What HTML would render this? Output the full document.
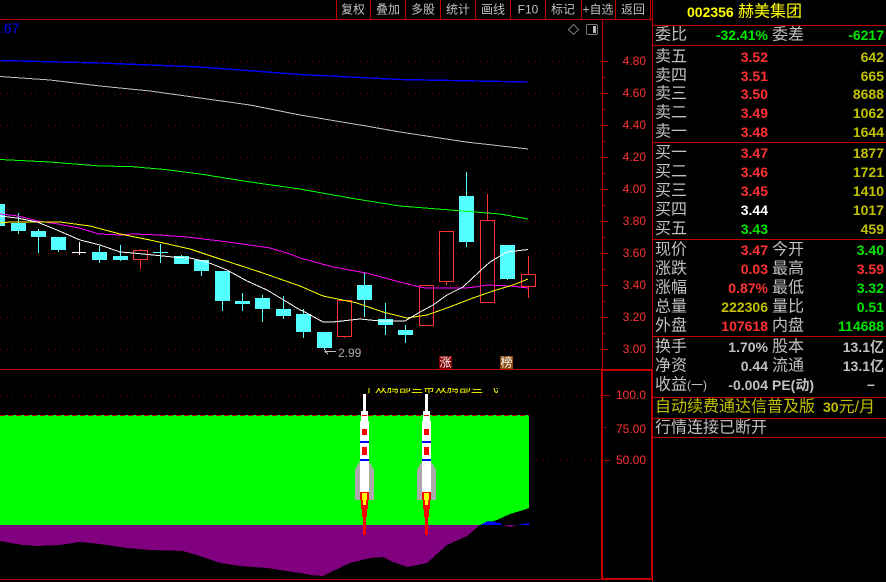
<!DOCTYPE html>
<html><head><meta charset="utf-8"><style>
html,body{margin:0;padding:0;background:#000;width:886px;height:582px;overflow:hidden}
svg{display:block}
text{font-family:"Liberation Sans","WenQuanYi Zen Hei","Noto Sans CJK SC",sans-serif;dominant-baseline:central}
.l{font-size:16px;fill:#c0c0c0}
.v{font-size:14px;font-weight:bold;text-anchor:end}
.r{fill:#ff3232}.g{fill:#00e600}.y{fill:#c0c000}.w{fill:#fff}.s{fill:#c0c0c0}
.t{font-size:12px;fill:#c0c0c0;text-anchor:middle}
.a{font-size:12px;fill:#ff3232;text-anchor:end}
.c{fill:#54ffff}.cw{stroke:#54ffff;stroke-width:1}
.o{fill:none;stroke:#ff3232;stroke-width:1}
</style></head><body>
<svg width="886" height="582" viewBox="0 0 886 582" xmlns="http://www.w3.org/2000/svg">
<defs><clipPath id="cp"><rect x="355" y="388" width="160" height="7"/></clipPath></defs>
<rect width="886" height="582" fill="#000"/>

<!-- grid dots -->
<g stroke="#960000" stroke-dasharray="1 5" shape-rendering="crispEdges" stroke-width="1">
<path d="M0 61.5H602M0 93.5H602M0 125.5H602M0 157.5H602M0 189.5H602M0 221.5H602M0 253.5H602M0 285.5H602M0 317.5H602M0 349.5H602M0 395.5H602M530 460.5H602"/>
</g>

<!-- lower chart -->
<polygon points="0,415 529,415 529,508 520,511 510,514 497,520 480,525 0,525" fill="#00ff00" shape-rendering="crispEdges"/>
<polygon points="0,525 480,525 467,536 447,545 427,563 407,567 393,562 383,557 370,558 350,563 333,571 323,576 310,575 300,573 267,568 240,566 220,563 200,556 183,551 150,550 127,548 100,544 80,542 60,545 37,546 23,545 10,543 0,541" fill="#800080" shape-rendering="crispEdges"/>
<polygon points="480,525 488,521 500,523 503,525" fill="#0000ff" shape-rendering="crispEdges"/>
<polygon points="517,525 522,524 529,523 529,525" fill="#0000ff" shape-rendering="crispEdges"/>
<polygon points="503,525 517,525 510,527" fill="#800080" shape-rendering="crispEdges"/>
<path d="M0 415.5H529" stroke="#c00000" stroke-dasharray="5 3" shape-rendering="crispEdges"/>
<g clip-path="url(#cp)"><text x="363" y="388" font-size="12" fill="#ffff00">千双腾部些带双腾部些 飞</text></g>

<!-- rockets -->
<g shape-rendering="crispEdges">
<polygon points="360,461 355,470 355,500 374,500 374,470 369,461" fill="#aaa"/>
<rect x="363" y="394" width="3" height="17" fill="#fff"/>
<rect x="361" y="411" width="7" height="10" fill="#fff"/>
<rect x="362" y="415" width="5" height="1" fill="#e00000"/>
<rect x="360" y="421" width="9" height="71" fill="#fff"/>
<rect x="362" y="429" width="5" height="6" fill="#f00"/>
<rect x="360" y="441" width="9" height="2" fill="#0000ff"/>
<rect x="362" y="447" width="5" height="8" fill="#f00"/>
<rect x="360" y="459" width="9" height="2" fill="#0000ff"/>
<rect x="360" y="492" width="9" height="8" fill="#f00"/>
<rect x="361" y="500" width="7" height="9" fill="#f00"/>
<rect x="362" y="509" width="5" height="8" fill="#f00"/>
<rect x="363" y="517" width="3" height="18" fill="#f00"/>
<polygon points="362,493 367,493 367,500 366,500 366,505 363,505 363,500 362,500" fill="#ffff00"/>
</g>
<g shape-rendering="crispEdges" transform="translate(62 0)">
<polygon points="360,461 355,470 355,500 374,500 374,470 369,461" fill="#aaa"/>
<rect x="363" y="394" width="3" height="17" fill="#fff"/>
<rect x="361" y="411" width="7" height="10" fill="#fff"/>
<rect x="362" y="415" width="5" height="1" fill="#e00000"/>
<rect x="360" y="421" width="9" height="71" fill="#fff"/>
<rect x="362" y="429" width="5" height="6" fill="#f00"/>
<rect x="360" y="441" width="9" height="2" fill="#0000ff"/>
<rect x="362" y="447" width="5" height="8" fill="#f00"/>
<rect x="360" y="459" width="9" height="2" fill="#0000ff"/>
<rect x="360" y="492" width="9" height="8" fill="#f00"/>
<rect x="361" y="500" width="7" height="9" fill="#f00"/>
<rect x="362" y="509" width="5" height="8" fill="#f00"/>
<rect x="363" y="517" width="3" height="18" fill="#f00"/>
<polygon points="362,493 367,493 367,500 366,500 366,505 363,505 363,500 362,500" fill="#ffff00"/>
</g>

<!-- candles -->
<g shape-rendering="crispEdges">
<rect x="0" y="204" width="5" height="22" class="c"/>
<path class="cw" d="M18.5 213V234M38.5 229V253M58.5 237V252M99.5 246V263M120.5 245V261M160.5 244V263M181.5 255V264M201.5 260V276M222.5 271V311M242.5 293V311M262.5 295V322M283.5 296V319M303.5 309V338M324.5 332V350M364.5 272V317M385.5 303V335M405.5 325V343M466.5 172V247M507.5 245V280"/>
<rect x="11" y="223" width="15" height="8" class="c"/>
<rect x="31" y="231" width="15" height="6" class="c"/>
<rect x="51" y="237" width="15" height="13" class="c"/>
<rect x="92" y="252" width="15" height="8" class="c"/>
<rect x="113" y="256" width="15" height="4" class="c"/>
<rect x="153" y="252" width="15" height="1" class="c"/>
<rect x="174" y="256" width="15" height="8" class="c"/>
<rect x="194" y="260" width="15" height="11" class="c"/>
<rect x="215" y="271" width="15" height="30" class="c"/>
<rect x="235" y="301" width="15" height="3" class="c"/>
<rect x="255" y="298" width="15" height="11" class="c"/>
<rect x="276" y="309" width="15" height="7" class="c"/>
<rect x="296" y="314" width="15" height="18" class="c"/>
<rect x="317" y="332" width="15" height="16" class="c"/>
<rect x="357" y="285" width="15" height="15" class="c"/>
<rect x="378" y="319" width="15" height="6" class="c"/>
<rect x="398" y="330" width="15" height="5" class="c"/>
<rect x="459" y="196" width="15" height="46" class="c"/>
<rect x="500" y="245" width="15" height="34" class="c"/>
<path d="M79.5 242V255M72 252.5H86" stroke="#fff" fill="none"/>
<path d="M140.5 249V250M140.5 259V269M344.5 336V338M446.5 281V285M487.5 194V220M528.5 256V274M528.5 286V298" stroke="#ff3232" fill="none"/>
<rect x="133.5" y="250.5" width="14" height="9" class="o"/>
<rect x="337.5" y="300.5" width="14" height="36" class="o"/>
<rect x="419.5" y="285.5" width="14" height="40" class="o"/>
<rect x="439.5" y="231.5" width="14" height="50" class="o"/>
<rect x="480.5" y="220.5" width="14" height="82" class="o"/>
<rect x="521.5" y="274.5" width="14" height="12" class="o"/>
</g>

<!-- MA lines -->
<g fill="none" stroke-width="1" shape-rendering="crispEdges">
<polyline stroke="#0000ff" stroke-width="1.4" points="0,60.5 100,63 200,67 300,74.5 400,79.5 528,82"/>
<polyline stroke="#c0c0c0" points="0,76.5 50,80 100,86 150,91 200,98 250,105 300,115 366,126 400,132 433,137 466,142 528,149"/>
<polyline stroke="#00ff00" points="0,159.5 50,162 100,166 130,166.5 165,169.5 200,174 250,182 300,189 350,198 400,206 450,210 500,214 528,219"/>
<polyline stroke="#ff00ff" points="0,214 18,216 38,221 58,224 79,228 99,234 120,235 133,234 160,235 187,237 220,241 250,245 270,248 290,254 300,258 333,267 366,273 400,282 416,286 425,288 466,288 475,287 487,285 510,286 528,288"/>
<polyline stroke="#ffff00" points="0,223 10,222 60,222 90,226 120,234 150,240 190,249 220,259 260,272 300,286 323,296 357,303 383,312 407,318 427,315 447,308 473,298 493,291 513,285 528,279"/>
<polyline stroke="#fff" points="0,216 17,218 37,222 57,230 80,240 100,245 120,252 133,253 153,255 173,257 190,258 207,262 227,270 247,281 267,290 287,302 300,310 303,311 323,322 333,322 360,319 380,321 405,321 420,312 433,305 447,295 463,287 480,271 490,262 507,252 528,249.5"/>
</g>

<text x="0" y="28" font-size="14" fill="#0000ff">.67</text>
<path d="M326 349.5L325 351.5H336M325 351.5L328 354" stroke="#c0c0c0" fill="none" shape-rendering="crispEdges"/>
<text x="338" y="353" font-size="12" fill="#aaa">2.99</text>
<rect x="439" y="356" width="13" height="13" fill="#800000"/>
<rect x="500" y="356" width="13" height="13" fill="#8b4a10"/>
<text x="445.5" y="362.5" font-size="12" fill="#fff" text-anchor="middle">涨</text>
<text x="506.5" y="362.5" font-size="12" fill="#fff" text-anchor="middle">榜</text>

<!-- icons -->
<path d="M573.5 24.5L578.5 29.5L573.5 34.5L568.5 29.5Z" fill="none" stroke="#777" shape-rendering="crispEdges"/>
<rect x="586.5" y="24.5" width="11" height="10" rx="1.5" fill="none" stroke="#777"/>
<rect x="593" y="26" width="3" height="7" fill="#bbb"/>

<!-- frame lines -->
<g stroke="#c00000" fill="none" shape-rendering="crispEdges">
<path d="M0 19.5H652M336.5 0V19M370.5 0V19M405.5 0V19M440.5 0V19M475.5 0V19M510.5 0V19M545.5 0V19M581.5 0V19M615.5 0V19M650.5 0V19"/>
<path d="M602.5 19V370M652.5 0V582M0 369.5H602M0 579.5H602"/>
<path d="M653 25.5H886M653 45.5H886M653 142.5H886M653 239.5H886M653 336.5H886M653 397.5H886M653 418.5H886M653 437.5H886"/>
<path d="M602 61.5H608M602 93.5H608M602 125.5H608M602 157.5H608M602 189.5H608M602 221.5H608M602 253.5H608M602 285.5H608M602 317.5H608M602 349.5H608M602 77.5H605M602 109.5H605M602 141.5H605M602 173.5H605M602 205.5H605M602 237.5H605M602 269.5H605M602 301.5H605M602 333.5H605M604 395.5H610M604 427.5H606M604 460.5H610"/>
<rect x="602" y="370" width="50" height="209" stroke-width="2"/>
</g>

<!-- toolbar -->
<text class="t" x="353" y="9.5">复权</text><text class="t" x="388" y="9.5">叠加</text><text class="t" x="423" y="9.5">多股</text><text class="t" x="458" y="9.5">统计</text><text class="t" x="493" y="9.5">画线</text><text class="t" x="528" y="9.5">F10</text><text class="t" x="563" y="9.5">标记</text><text class="t" x="598" y="9.5">+自选</text><text class="t" x="633" y="9.5">返回</text>

<!-- axis -->
<text class="a" x="646" y="61">4.80</text><text class="a" x="646" y="93">4.60</text><text class="a" x="646" y="125">4.40</text><text class="a" x="646" y="157">4.20</text><text class="a" x="646" y="189">4.00</text><text class="a" x="646" y="221">3.80</text><text class="a" x="646" y="253">3.60</text><text class="a" x="646" y="285">3.40</text><text class="a" x="646" y="317">3.20</text><text class="a" x="646" y="349">3.00</text>
<text class="a" x="646" y="395">100.0</text><text class="a" x="646" y="429">75.00</text><text class="a" x="646" y="460">50.00</text>

<!-- title -->
<text x="687" y="12" font-size="14" font-weight="bold" fill="#ffff00">002356</text>
<text x="738" y="12" font-size="16" fill="#ffff00">赫美集团</text>

<!-- quote rows -->
<text class="l" x="655" y="35">委比</text><text class="v g" x="768" y="35">-32.41%</text><text class="l" x="772" y="35">委差</text><text class="v g" x="884" y="35">-6217</text>

<text class="l" x="655" y="57">卖五</text><text class="v r" x="768" y="57">3.52</text><text class="v y" x="884" y="57">642</text>
<text class="l" x="655" y="76">卖四</text><text class="v r" x="768" y="76">3.51</text><text class="v y" x="884" y="76">665</text>
<text class="l" x="655" y="94">卖三</text><text class="v r" x="768" y="94">3.50</text><text class="v y" x="884" y="94">8688</text>
<text class="l" x="655" y="113">卖二</text><text class="v r" x="768" y="113">3.49</text><text class="v y" x="884" y="113">1062</text>
<text class="l" x="655" y="132">卖一</text><text class="v r" x="768" y="132">3.48</text><text class="v y" x="884" y="132">1644</text>

<text class="l" x="655" y="153">买一</text><text class="v r" x="768" y="153">3.47</text><text class="v y" x="884" y="153">1877</text>
<text class="l" x="655" y="172">买二</text><text class="v r" x="768" y="172">3.46</text><text class="v y" x="884" y="172">1721</text>
<text class="l" x="655" y="191">买三</text><text class="v r" x="768" y="191">3.45</text><text class="v y" x="884" y="191">1410</text>
<text class="l" x="655" y="210">买四</text><text class="v w" x="768" y="210">3.44</text><text class="v y" x="884" y="210">1017</text>
<text class="l" x="655" y="229">买五</text><text class="v g" x="768" y="229">3.43</text><text class="v y" x="884" y="229">459</text>

<text class="l" x="655" y="250">现价</text><text class="v r" x="768" y="250">3.47</text><text class="l" x="772" y="250">今开</text><text class="v g" x="884" y="250">3.40</text>
<text class="l" x="655" y="269">涨跌</text><text class="v r" x="768" y="269">0.03</text><text class="l" x="772" y="269">最高</text><text class="v r" x="884" y="269">3.59</text>
<text class="l" x="655" y="288">涨幅</text><text class="v r" x="768" y="288">0.87%</text><text class="l" x="772" y="288">最低</text><text class="v g" x="884" y="288">3.32</text>
<text class="l" x="655" y="307">总量</text><text class="v y" x="768" y="307">222306</text><text class="l" x="772" y="307">量比</text><text class="v g" x="884" y="307">0.51</text>
<text class="l" x="655" y="326">外盘</text><text class="v r" x="768" y="326">107618</text><text class="l" x="772" y="326">内盘</text><text class="v g" x="884" y="326">114688</text>

<text class="l" x="655" y="347">换手</text><text class="v s" x="768" y="347">1.70%</text><text class="l" x="772" y="347">股本</text><text class="v s" x="884" y="347">13.1亿</text>
<text class="l" x="655" y="366">净资</text><text class="v s" x="768" y="366">0.44</text><text class="l" x="772" y="366">流通</text><text class="v s" x="884" y="366">13.1亿</text>
<text class="l" x="655" y="385">收益<tspan font-size="12">(一)</tspan></text><text class="v s" x="768" y="385">-0.004</text><text class="l" x="772" y="385" style="font-size:14px;font-weight:bold">PE(动)</text><text class="v s" x="875" y="385">−</text>

<text x="655" y="407" font-size="16" fill="#c0c000" textLength="160">自动续费通达信普及版</text>
<text x="823" y="407" font-size="14" font-weight="bold" fill="#c0c000">30<tspan font-size="16" font-weight="normal" dx="0">元/月</tspan></text>
<text class="l" x="655" y="428">行情连接已断开</text>
</svg>
</body></html>
